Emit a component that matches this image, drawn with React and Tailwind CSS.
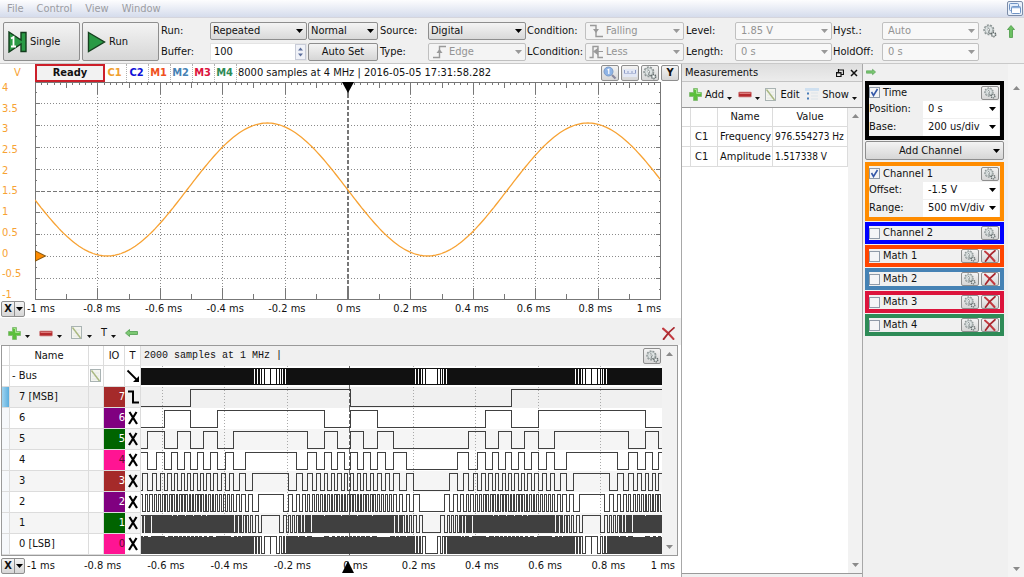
import React from "react";

const cx = (...parts) => parts.filter(Boolean).join(" ");

/* ---------- icons ---------- */

function Caret({ className = "text-black" }) {
  return (
    <svg aria-hidden="true" width="7" height="4" viewBox="0 0 7 4" className={cx("shrink-0", className)}>
      <path d="M0 0H7L3.5 4Z" fill="currentColor" />
    </svg>
  );
}

function CaretUp() {
  return (
    <svg aria-hidden="true" width="7" height="4" viewBox="0 0 7 4" className="text-[#8a8a8a]">
      <path d="M0 4H7L3.5 0Z" fill="currentColor" />
    </svg>
  );
}

function MiniCaret() {
  return (
    <svg aria-hidden="true" width="5" height="12" viewBox="0 0 5 12" className="shrink-0">
      <path d="M0 8H5L2.5 11Z" fill="#111" />
    </svg>
  );
}

function GearIcon({ size = 14 }) {
  return (
    <svg aria-hidden="true" width={size} height={size} viewBox="0 0 14 14">
      <circle cx="5.8" cy="5.8" r="4.6" fill="none" stroke="#8b9494" strokeWidth="1.8" strokeDasharray="1.9 1.3" />
      <circle cx="5.8" cy="5.8" r="4" fill="#dde3e3" stroke="#9aa2a2" strokeWidth="0.8" />
      <path d="M5 3.500L6.500 6L5.500 8.500L8 10L10 9.500" fill="none" stroke="#6a7272" strokeWidth="0.9" />
      <circle cx="5.4" cy="5.4" r="1" fill="#fff" stroke="#8a9292" strokeWidth="0.5" />
      <circle cx="10.6" cy="10.6" r="2.2" fill="#c3caca" stroke="#5f6767" strokeWidth="1.300" strokeDasharray="1.3 0.8" />
      <circle cx="10.6" cy="10.6" r="0.8" fill="#fff" />
    </svg>
  );
}

function PlusIcon() {
  return (
    <svg aria-hidden="true" width="13" height="13" viewBox="0 0 13 13">
      <path d="M4.500 0.500H8.500V4.500H12.500V8.500H8.500V12.500H4.500V8.500H0.500V4.500H4.500Z" fill="#5cbf3c" stroke="#7fb870" strokeWidth="0.8" />
      <path d="M5.500 1.500H7.500V5.500H11.500" fill="none" stroke="#a5e58d" strokeWidth="1" />
    </svg>
  );
}

function MinusIcon() {
  return (
    <svg aria-hidden="true" width="14" height="13" viewBox="0 0 14 13">
      <rect x="0.500" y="4" width="13" height="5" rx="1" fill="#b52a2e" stroke="#d59a9a" strokeWidth="0.8" />
      <path d="M1.500 5.500H12.500" stroke="#dd7c7c" strokeWidth="1" />
    </svg>
  );
}

function EditIcon({ className }) {
  return (
    <svg aria-hidden="true" width="12" height="14" viewBox="0 0 12 14" className={className}>
      <rect x="0.500" y="0.500" width="10" height="12" fill="#f3f4ee" stroke="#a9b3b3" />
      <path d="M2 4H9M2 7H9M2 10H9" stroke="#dfe5e5" strokeWidth="0.8" />
      <path d="M1.500 1.500L9.500 12" stroke="#a9b880" strokeWidth="1.4" />
    </svg>
  );
}

function ListIcon() {
  return (
    <svg aria-hidden="true" width="14" height="13" viewBox="0 0 14 13">
      <rect x="0" y="0" width="14" height="3" fill="#cfe0f0" />
      <path d="M2 5.500H4M2 10.500H4" stroke="#4a7db8" strokeWidth="2" />
      <path d="M6 5H13M6 8H13M6 11H13" stroke="#dce3ea" strokeWidth="1.2" />
    </svg>
  );
}

function CloseRed({ size = 12 }) {
  return (
    <svg aria-hidden="true" width={size} height={size} viewBox="0 0 12 12">
      <path d="M1 1.500Q5.500 5 10.500 11" stroke="#c23a40" strokeWidth="2" fill="none" strokeLinecap="round" />
      <path d="M11 0.800Q6 4.500 1.500 11.200" stroke="#a8282f" strokeWidth="1.7" fill="none" strokeLinecap="round" />
    </svg>
  );
}

function GreenArrow({ dir = "right" }) {
  if (dir === "up") {
    return (
      <svg aria-hidden="true" width="8" height="13" viewBox="0 0 8 13">
        <path d="M4 0.500L7.500 4.500H5.500V12.500H2.500V4.500H0.500Z" fill="#6cc062" stroke="#4a9a48" strokeWidth="0.8" />
      </svg>
    );
  }
  return (
    <svg aria-hidden="true" width={dir === "left" ? "13" : "10"} height="8" viewBox="0 0 13 8" className={dir === "left" ? "" : "rotate-180"}>
      <path d="M0.500 4L4.500 0.500V2.500H12.500V5.500H4.500V7.500Z" fill="#7cc872" stroke="#4f9c4e" strokeWidth="0.8" />
    </svg>
  );
}

function FallingIcon() {
  return (
    <svg aria-hidden="true" width="15" height="14" viewBox="0 0 15 14">
      <path d="M1 1.500H7V12.500H14" fill="none" stroke="#999" strokeWidth="1.4" />
      <path d="M4 5H10L7 9Z" fill="#999" />
    </svg>
  );
}

function RisingIcon() {
  return (
    <svg aria-hidden="true" width="15" height="14" viewBox="0 0 15 14">
      <path d="M1 12.500H7.500V1.500H14" fill="none" stroke="#999" strokeWidth="1.4" />
      <path d="M4.500 8H10.500L7.500 4Z" fill="#999" />
    </svg>
  );
}

function PulseIcon() {
  return (
    <svg aria-hidden="true" width="15" height="14" viewBox="0 0 15 14">
      <path d="M0.500 12.500H4V1.500H9V12.500H14" fill="none" stroke="#999" strokeWidth="1.4" />
      <path d="M5 6.500L8.500 4V9ZM8 6.500H14" fill="#999" stroke="#999" strokeWidth="1.2" />
    </svg>
  );
}

function SingleIcon() {
  return (
    <svg aria-hidden="true" width="19" height="22" viewBox="0 0 19 22">
      <path d="M1 1L13 9V1.500H18V20.500H13V13L1 21Z" fill="#2a9a45" stroke="#123c1c" strokeWidth="1.4" />
      <path d="M3 7.500L5.500 6V15M3 15.500H8" fill="none" stroke="#fff" strokeWidth="1.8" />
    </svg>
  );
}

function RunIcon() {
  return (
    <svg aria-hidden="true" width="19" height="22" viewBox="0 0 19 22">
      <path d="M1.500 1.500L17.500 11L1.500 20.500Z" fill="#2a9a45" stroke="#16401f" strokeWidth="1.4" />
    </svg>
  );
}

function MagnifierIcon() {
  return (
    <svg aria-hidden="true" width="14" height="14" viewBox="0 0 14 14">
      <circle cx="5.500" cy="5.500" r="4.500" fill="#8fb4e6" stroke="#7a9cc9" />
      <path d="M4.500 4L5.800 3.200V8" fill="none" stroke="#fff" strokeWidth="1.2" />
      <path d="M9 9L12.500 12.500" stroke="#8a8aa0" strokeWidth="2.200" />
    </svg>
  );
}

function RulerIcon() {
  return (
    <svg aria-hidden="true" width="14" height="10" viewBox="0 0 14 10">
      <rect x="0" y="1" width="14" height="8" fill="#e3e8f5" />
      <path d="M1.500 2V5M5 3V5M9 3V5M12.500 2V5" stroke="#8f9cc4" />
      <path d="M1 5.500H13" stroke="#b4bedb" />
    </svg>
  );
}

function WindowIcon() {
  return (
    <svg aria-hidden="true" width="12" height="11" viewBox="0 0 12 11">
      <rect x="0.500" y="0.500" width="9" height="7" rx="1" fill="#e4eefb" stroke="#6f93c4" />
      <rect x="2.500" y="3.500" width="9" height="7" rx="1" fill="#fff" stroke="#6f93c4" />
      <path d="M3 4.500H11" stroke="#8fb0dc" strokeWidth="1.500" />
    </svg>
  );
}

/* ---------- controls ---------- */

const raised =
  "flex items-center justify-center rounded-xs border border-[#8e8e8e] bg-linear-to-b from-[#f4f4f4] to-[#d6d6d6]";

function Combo({ label, value, icon, disabled, plain, className }) {
  return (
    <div className={cx("relative flex h-[18px] items-center", className)}>
      <select
        aria-label={label}
        disabled={disabled}
        defaultValue={value}
        className={cx(
          "h-full w-full appearance-none rounded-xs border opacity-100 outline-none",
          icon ? "pl-5" : disabled ? "pl-[5px]" : "pl-[2px]",
          disabled ? "border-[#c0c0c0] text-[#939393]" : "border-[#8e8e8e] text-[#111]",
          plain ? "bg-[#f8f8f8]" : disabled ? "bg-[#f4f4f4]" : "bg-linear-to-b from-[#f4f4f4] to-[#d9d9d9]"
        )}
      >
        <option>{value}</option>
      </select>
      {icon && <span className="pointer-events-none absolute left-1">{icon}</span>}
      <span className="pointer-events-none absolute right-1">
        <Caret className={disabled ? "text-[#999]" : "text-black"} />
      </span>
    </div>
  );
}

function IconButton({ label, children, className }) {
  return (
    <button type="button" aria-label={label} className={cx(raised, "h-4 w-[18px] shrink-0", className)}>
      {children}
    </button>
  );
}

function FlatButton({ label, children, className = "gap-[3px]" }) {
  return (
    <button type="button" aria-label={label} className={cx("flex items-center", className)}>
      {children}
    </button>
  );
}

/* ---------- top bars ---------- */

function MenuBar() {
  return (
    <header className="flex h-[18px] items-center justify-between border-b border-[#d5d5dc] bg-linear-to-b from-[#fdfdfe] to-[#d5dcec] pr-px pl-[7px]">
      <nav className="flex gap-[13px] pt-px text-[#9b9ca2]">
        {["File", "Control", "View", "Window"].map((m) => (
          <a key={m} href={"#" + m.toLowerCase()}>{m}</a>
        ))}
      </nav>
      <button type="button" aria-label="Restore window" className="flex h-[15px] w-[16px] items-center justify-center rounded-xs border border-[#7d8da8] bg-[#eaf1fb]">
        <WindowIcon />
      </button>
    </header>
  );
}

function TriggerBar() {
  return (
    <div className="flex items-center border-b border-[#c9c9c9] pt-1 pb-[2px] pl-[3px]">
      <button type="button" className={cx(raised, "h-[39px] w-[77px] justify-start gap-[3px] pl-1")}>
        <SingleIcon /> Single
      </button>
      <button type="button" className={cx(raised, "ml-[2px] mr-[2px] h-[39px] w-[77px] justify-start gap-[3px] pl-1")}>
        <RunIcon /> Run
      </button>
      <div className="grid grid-cols-[48px_97px_70px_48px_98px_57px_99px_49px_97px_48px_97px] items-center gap-x-px gap-y-[3px]">
        <span>Run:</span>
        <Combo label="Run" value="Repeated" />
        <Combo label="Trigger mode" value="Normal" />
        <span className="pl-px">Source:</span>
        <Combo label="Source" value="Digital" />
        <span>Condition:</span>
        <Combo label="Condition" value="Falling" icon={<FallingIcon />} disabled />
        <span className="pl-px">Level:</span>
        <Combo label="Level" value="1.85 V" disabled plain />
        <span>Hyst.:</span>
        <Combo label="Hysteresis" value="Auto" disabled plain />
        <label htmlFor="buffer">Buffer:</label>
        <div className="flex h-[18px] border border-[#e4e4e4] bg-white">
          <input id="buffer" type="text" defaultValue="100" className="w-0 flex-1 pl-[3px] outline-none" />
          <span className="flex w-[11px] flex-col items-center justify-center gap-1 border border-[#c8ccd8] bg-[#f0f2f8]">
            <svg aria-hidden="true" width="7" height="12" viewBox="0 0 7 12">
              <path d="M1 4.500L3.500 1.500L6 4.500ZM1 7.500L3.500 10.500L6 7.500Z" fill="#5d6f9c" />
            </svg>
          </span>
        </div>
        <button type="button" className={cx(raised, "h-[18px]")}>Auto Set</button>
        <span className="pl-px">Type:</span>
        <Combo label="Type" value="Edge" icon={<RisingIcon />} disabled />
        <span>LCondition:</span>
        <Combo label="LCondition" value="Less" icon={<PulseIcon />} disabled />
        <span className="pl-px">Length:</span>
        <Combo label="Length" value="0 s" disabled plain />
        <span>HoldOff:</span>
        <Combo label="HoldOff" value="0 s" disabled plain />
      </div>
      <div className="flex gap-[10px] self-start pt-[2px] pl-1">
        <FlatButton label="Trigger settings"><GearIcon /></FlatButton>
        <FlatButton label="Collapse toolbar"><GreenArrow dir="up" /></FlatButton>
      </div>
    </div>
  );
}

/* ---------- analog scope ---------- */

const sinePath = Array.from({ length: 313 }, (_, i) => {
  const x = i * 2;
  const y = 107.5 - 66.5 * Math.cos((2 * Math.PI * (x - 232)) / 320);
  return (i ? "L" : "M") + x + " " + y.toFixed(1);
}).join("");

function AnalogPlot() {
  const v = Array.from({ length: 9 }, (_, i) => Math.round(62.4 * (i + 1)) + 0.5);
  const h = Array.from({ length: 9 }, (_, i) => Math.round(21.9 * (i + 1) - 1) + 0.5);
  let ticks = "";
  for (let i = 1; i < 100; i++) {
    const x = Math.round(i * 6.24) + 0.5;
    const len = i % 10 === 0 ? 12 : i % 5 === 0 ? 6 : 3;
    ticks += `M${x} 0V${len}`;
    if (i % 5 === 0) ticks += `M${x} 218V${218 - len}`;
  }
  for (let i = 1; i < 20; i++) {
    const y = Math.round(i * 10.95 - 1) + 0.5;
    const len = i % 2 === 0 ? 5 : 2;
    ticks += `M0 ${y}H${len}M625 ${y}H${625 - len}`;
  }
  return (
    <svg role="img" aria-label="Channel 1 waveform" viewBox="0 0 625 218" preserveAspectRatio="none" className="h-[218px] w-full min-w-0 flex-1 bg-white">
      <g shapeRendering="crispEdges" fill="none">
        <path d={v.filter((_, i) => i !== 4).map((x) => `M${x} 0V218`).join("") + h.filter((_, i) => i !== 4).map((y) => `M0 ${y}H625`).join("")} stroke="#8a8a8a" strokeDasharray="1 2" />
        <path d={`M${v[4]} 0V218M0 ${h[4]}H625`} stroke="#777" strokeDasharray="4 2" />
        <path d={ticks} stroke="#777" />
        <rect x="0.500" y="0.500" width="624" height="217" stroke="#777" />
      </g>
      <path d={sinePath} fill="none" stroke="#f7a233" strokeWidth="1.300" />
      <path d="M306.500 0H318.500L312.500 11Z" fill="#000" />
      <path d="M0.500 169L10.500 174L0.500 179Z" fill="#ff8c00" stroke="#8a5a14" />
    </svg>
  );
}

const timeLabels = ["-1 ms", "-0.8 ms", "-0.6 ms", "-0.4 ms", "-0.2 ms", "0 ms", "0.2 ms", "0.4 ms", "0.6 ms", "0.8 ms", "1 ms"];

function TimeAxis({ className, marker }) {
  return (
    <div className={cx("flex items-center bg-white pl-px", className)}>
      <button type="button" aria-label="X axis menu" className={cx(raised, "h-4 w-6 shrink-0 font-bold")}>
        <span className="flex-1">X</span>
        <span className="flex h-full w-[10px] items-center justify-center border-l border-[#8e8e8e]"><Caret /></span>
      </button>
      {timeLabels.map((t, i) => (
        <span
          key={t}
          className={cx(
            "whitespace-nowrap",
            i === 0 ? "w-[46px] pl-[2px]" : i === 10 ? "w-[35px] text-right" : "relative flex-1 text-center"
          )}
        >
          {t}
          {marker && i === 5 && (
            <svg aria-hidden="true" width="12" height="12" viewBox="0 0 12 12" className="absolute top-[2px] left-[18px]">
              <path d="M0 12H12L6 0Z" fill="#000" />
            </svg>
          )}
        </span>
      ))}
    </div>
  );
}

const tabs = [
  ["C1", "text-[#f0a030] bg-white"],
  ["C2", "text-[#1010d8]"],
  ["M1", "text-[#f05020]"],
  ["M2", "text-[#4682b4]"],
  ["M3", "text-[#dc143c]"],
  ["M4", "text-[#2e8b57]"],
];

function AnalogScope() {
  return (
    <section className="bg-white">
      <div className="flex h-[18px] items-center">
        <span className="w-[35px] text-center text-[#f7a233]">V</span>
        <span className="flex h-[18px] w-[70px] items-center justify-center border-2 border-[#cc1f2a] bg-[#f2f2f2] font-bold">Ready</span>
        {tabs.map(([name, tone]) => (
          <button key={name} type="button" className={cx("h-full w-[22px] border-r border-dotted border-[#b0b0b0] pr-[2px] font-bold", tone)}>
            {name}
          </button>
        ))}
        <span className="flex-1 pl-px whitespace-nowrap">8000 samples at 4 MHz | 2016-05-05 17:31:58.282</span>
        <div className="flex gap-[2px] pr-[2px]">
          <IconButton label="Zoom"><MagnifierIcon /></IconButton>
          <IconButton label="Ruler"><RulerIcon /></IconButton>
          <IconButton label="Plot settings"><GearIcon /></IconButton>
          <IconButton label="Y axis"><b>Y</b></IconButton>
        </div>
      </div>
      <div className="flex pr-5">
        <div className="flex w-[35px] shrink-0 flex-col justify-between pl-[2px] leading-[11px] text-[#f7a233]">
          {["4", "3.5", "3", "2.5", "2", "1.5", "1", "0.5", "0", "-0.5", "-1"].map((n) => (
            <span key={n}>{n}</span>
          ))}
        </div>
        <AnalogPlot />
      </div>
      <TimeAxis className="h-[18px] pr-5" />
    </section>
  );
}

/* ---------- logic analyzer ---------- */

const WAVE_W = 520;
const STEPS = WAVE_W * 4;
const codes = Array.from({ length: STEPS }, (_, i) => {
  const s = Math.sin((2 * Math.PI * (i / 4 - 49.5)) / 320);
  return Math.floor(128 + 127.9 * s);
});

function edgesOf(bit) {
  const edges = [];
  let prev = (codes[0] >> bit) & 1;
  const first = prev;
  for (let i = 1; i < STEPS; i++) {
    const b = (codes[i] >> bit) & 1;
    if (b !== prev) {
      edges.push([Math.floor(i / 4), b]);
      prev = b;
    }
  }
  return { first, edges };
}

function bitPath(bit) {
  const { first, edges } = edgesOf(bit);
  let d = `M0 ${first ? 2.5 : 19.5}`;
  for (const [x, b] of edges) d += `H${x + 0.5}V${b ? 2.5 : 19.5}`;
  d += `H${WAVE_W}`;
  if (bit === 0) d += "M129.500 2V20M449.500 2V20";
  return d;
}

const busLines = edgesOf(0).edges.map(([x]) => `M${x + 0.5} 2V19`).join("") + "M129.500 2V19M449.500 2V19";
const gridX = [21, 83, 146, 271, 333, 396, 458];

function Wave({ bit }) {
  const isBus = bit === undefined;
  return (
    <svg aria-hidden="true" viewBox="0 0 520 21" preserveAspectRatio="none" shapeRendering="crispEdges" className="block h-[21px] w-full">
      <path d={gridX.map((x) => `M${x + 0.5} 0V21`).join("")} stroke="#aaa" strokeDasharray="1 2" />
      <path d="M208.500 0V21" stroke="#666" strokeDasharray="4 2" />
      {isBus && <rect x="0" y="2" width="520" height="17" fill="#fff" />}
      {isBus && <path d="M0 2.500H520M0 18.500H520" stroke="#111" />}
      <path d={isBus ? busLines : bitPath(bit)} fill="none" stroke={isBus ? "#111" : "#404040"} />
    </svg>
  );
}

function TriggerGlyph({ kind }) {
  return (
    <svg aria-hidden="true" width="14" height="16" viewBox="0 0 14 16" className="mx-auto">
      {kind === "x" && <path d="M3.500 2L11 14M10.500 2L3 14" stroke="#000" strokeWidth="2.200" />}
      {kind === "fall" && <path d="M2 2.500H7V13.500H13" stroke="#000" strokeWidth="2" fill="none" />}
      {kind === "arrow" && (
        <>
          <path d="M1.500 2.500L11 12" stroke="#000" strokeWidth="1.800" />
          <path d="M13 14V8L7 14Z" fill="#000" />
        </>
      )}
    </svg>
  );
}

const bits = [
  { bit: 7, name: "7 [MSB]", io: "bg-[#a52a2a] text-white", row: "bg-[#f0f0f0]" },
  { bit: 6, name: "6", io: "bg-[#800080] text-white", row: "bg-white" },
  { bit: 5, name: "5", io: "bg-[#006400] text-white", row: "bg-[#f5f5f5]" },
  { bit: 4, name: "4", io: "bg-[#ff1493] text-[#5a1030]", row: "bg-white" },
  { bit: 3, name: "3", io: "bg-[#a52a2a] text-white", row: "bg-[#f5f5f5]" },
  { bit: 2, name: "2", io: "bg-[#800080] text-white", row: "bg-white" },
  { bit: 1, name: "1", io: "bg-[#006400] text-white", row: "bg-[#f5f5f5]" },
  { bit: 0, name: "0 [LSB]", io: "bg-[#ff1493] text-[#5a1030]", row: "bg-white" },
];

const cell = "border-r border-b border-[#dcdcdc] p-0";

function LogicTable() {
  return (
    <table className="w-full min-w-0 flex-1 table-fixed border-separate border-spacing-0 bg-white">
      <colgroup>
        <col className="w-2" />
        <col className="w-[79px]" />
        <col className="w-[15px]" />
        <col className="w-[21px]" />
        <col className="w-4" />
        <col />
      </colgroup>
      <thead>
        <tr className="h-[20px]">
          <th className={cell} aria-label="Handle" />
          <th className={cx(cell, "font-normal")}>Name</th>
          <th className={cell} aria-label="Edit" />
          <th className={cx(cell, "font-normal")}>IO</th>
          <th className={cx(cell, "font-normal")}>T</th>
          <th className="bg-[#f0f0f0] p-0 pl-[3px] font-normal">
            <div className="flex items-center justify-between">
              <span className="font-['Liberation_Mono',monospace] text-[10px]">2000 samples at 1 MHz |</span>
              <IconButton label="Logic settings" className="mr-px w-4"><GearIcon size={13} /></IconButton>
            </div>
          </th>
        </tr>
      </thead>
      <tbody>
        <tr className="h-[21px]">
          <td className={cell} />
          <td className={cx(cell, "pl-[2px]")}>- Bus</td>
          <td className={cell}><EditIcon className="mx-auto" /></td>
          <td className={cell} />
          <td className={cell}><TriggerGlyph kind="arrow" /></td>
          <td className="p-0"><Wave /></td>
        </tr>
        {bits.map((r) => (
          <tr key={r.bit} className={cx("h-[21px]", r.row)}>
            <td className={cx(cell, r.bit === 7 ? "bg-linear-to-r from-[#9fd4f0] to-[#5aaede]" : "bg-[#f6f8fb]")} />
            <td className={cx(cell, "pl-[9px]")}>{r.name}</td>
            <td className={cell} />
            <td className={cx("border-b border-[#dcdcdc] p-0 text-right", r.io)}>{r.bit}</td>
            <td className={cell}><TriggerGlyph kind={r.bit === 7 ? "fall" : "x"} /></td>
            <td className="p-0"><Wave bit={r.bit} /></td>
          </tr>
        ))}
      </tbody>
    </table>
  );
}

function LogicAnalyzer() {
  return (
    <section className="flex flex-1 flex-col bg-white">
      <div className="flex h-[27px] items-center gap-[9px] bg-[#f0f0f0] pt-[3px] pr-[6px] pl-2">
        <FlatButton label="Add signal" className="gap-1"><PlusIcon /><MiniCaret /></FlatButton>
        <FlatButton label="Remove signal" className="gap-1"><MinusIcon /><MiniCaret /></FlatButton>
        <FlatButton label="Edit signal" className="gap-1"><EditIcon /><MiniCaret /></FlatButton>
        <FlatButton label="Trigger" className="gap-1"><span>T</span><MiniCaret /></FlatButton>
        <FlatButton label="Dock left"><GreenArrow dir="left" /></FlatButton>
        <span className="flex-1" />
        <FlatButton label="Close logic view"><CloseRed size={13} /></FlatButton>
      </div>
      <div className="mr-[3px] ml-px flex border border-[#9a9a9a] bg-[#f0f0f0]">
        <LogicTable />
        <div className="flex w-[15px] shrink-0 flex-col items-center justify-between bg-[#f2f2f2] py-[6px]">
          <CaretUp />
          <Caret className="text-[#8a8a8a]" />
        </div>
      </div>
      <TimeAxis className="h-[20px] pr-[6px]" marker />
    </section>
  );
}

/* ---------- measurements ---------- */

const measures = [
  ["C1", "Frequency", "976.554273 Hz"],
  ["C1", "Amplitude", "1.517338 V"],
];

function Measurements() {
  const c = "border-r border-b border-[#dcdcdc] p-0";
  return (
    <aside className="flex w-[182px] shrink-0 flex-col border-x border-[#a8a8a8] bg-[#f0f0f0]">
      <div className="flex h-[18px] items-center justify-between border-b border-[#c4c4c4] bg-linear-to-b from-[#dedede] to-[#ececec] pr-1 pl-[3px]">
        <h2>Measurements</h2>
        <div className="flex gap-[6px]">
          <FlatButton label="Float panel">
            <svg aria-hidden="true" width="8" height="8" viewBox="0 0 8 8">
              <path d="M2.500 0V3M2 1H8M7.500 1V5.500H5" stroke="#111" fill="none" strokeWidth="1.200" />
              <path d="M0.500 3.500H5V7.500H0.500ZM0 4H5.500" stroke="#111" fill="none" strokeWidth="1.200" />
            </svg>
          </FlatButton>
          <FlatButton label="Close panel">
            <svg aria-hidden="true" width="8" height="8" viewBox="0 0 8 8">
              <path d="M1 1L7 7M7 1L1 7" stroke="#111" strokeWidth="1.500" />
            </svg>
          </FlatButton>
        </div>
      </div>
      <div className="flex h-[25px] items-center justify-between pr-[5px] pl-[7px]">
        <FlatButton label="Add"><PlusIcon /><span>Add</span><MiniCaret /></FlatButton>
        <FlatButton label="Remove"><MinusIcon /><MiniCaret /></FlatButton>
        <FlatButton label="Edit"><EditIcon /><span>Edit</span></FlatButton>
        <FlatButton label="Show"><ListIcon /><span>Show</span><MiniCaret /></FlatButton>
      </div>
      <div className="mb-[3px] flex flex-1 border-y border-[#9a9a9a] bg-white">
        <div className="flex-1">
          <table className="w-full table-fixed border-separate border-spacing-0">
            <colgroup>
              <col className="w-[9px]" />
              <col className="w-[27px]" />
              <col className="w-[55px]" />
              <col />
            </colgroup>
            <thead>
              <tr className="h-[19px]">
                <th className={c} aria-label="Handle" />
                <th className={c} aria-label="Channel" />
                <th className={cx(c, "font-normal")}>Name</th>
                <th className={cx(c, "font-normal")}>Value</th>
              </tr>
            </thead>
            <tbody>
              {measures.map(([ch, n, v]) => (
                <tr key={n} className="h-[20px]">
                  <td className={c} />
                  <td className={cx(c, "pl-1")}>{ch}</td>
                  <td className={cx(c, "pl-[2px] whitespace-nowrap")}>{n}</td>
                  <td className={cx(c, "pl-[2px] text-[10px] whitespace-nowrap")}>{v}</td>
                </tr>
              ))}
            </tbody>
          </table>
        </div>
        <div className="flex w-[14px] flex-col items-center justify-between bg-[#f2f2f2] py-[6px]">
          <CaretUp />
          <Caret className="text-[#8a8a8a]" />
        </div>
      </div>
    </aside>
  );
}

/* ---------- channel panel ---------- */

function Tick({ checked, label }) {
  return (
    <label className="flex flex-1 items-center gap-[3px]">
      <span className="relative flex">
        <input
          type="checkbox"
          defaultChecked={checked}
          className="peer size-[11px] appearance-none border border-[#8f9aa8] bg-[#f4f5f7]"
        />
        <svg aria-hidden="true" width="9" height="9" viewBox="0 0 9 9" className="pointer-events-none absolute top-px left-px hidden peer-checked:block">
          <path d="M1.500 4L3.500 7.500L7.500 1" stroke="#3558a8" strokeWidth="1.600" fill="none" />
        </svg>
      </span>
      {label}
    </label>
  );
}

function Field({ name, value }) {
  return (
    <div className="flex h-[18px] items-center">
      <span className="w-[54px]">{name}:</span>
      <div className="relative flex h-[17px] flex-1 items-center">
        <select aria-label={name} defaultValue={value} className="h-full w-full appearance-none bg-white pl-[5px] outline-none">
          <option>{value}</option>
        </select>
        <span className="pointer-events-none absolute right-[3px]"><Caret /></span>
      </div>
    </div>
  );
}

function ChannelBox({ label, tone, checked, removable, children }) {
  return (
    <div className={cx("border-4 pr-px", tone)}>
      <div className={cx("flex items-center gap-[2px]", children ? "h-[15px]" : "h-[14px]")}>
        <Tick label={label} checked={checked} />
        <IconButton label={label + " settings"} className="h-[14px]"><GearIcon size={12} /></IconButton>
        {removable && <IconButton label={"Remove " + label} className="h-[14px]"><CloseRed /></IconButton>}
      </div>
      {children}
    </div>
  );
}

function ChannelPanel() {
  return (
    <aside className="flex w-[161px] shrink-0 bg-[#f0f0f0]">
      <div className="flex w-[141px] flex-col gap-px pl-[2px]">
        <div className="flex h-4 items-center pl-px">
          <FlatButton label="Collapse panel"><GreenArrow /></FlatButton>
        </div>
        <ChannelBox label="Time" tone="border-black" checked>
          <Field name="Position" value="0 s" />
          <Field name="Base" value="200 us/div" />
        </ChannelBox>
        <button type="button" className={cx(raised, "mb-px h-[19px] pr-[3px]")}>
          <span className="flex-1 pl-[2px]">Add Channel</span>
          <Caret />
        </button>
        <ChannelBox label="Channel 1" tone="border-[#ff8c00]" checked>
          <Field name="Offset" value="-1.5 V" />
          <Field name="Range" value="500 mV/div" />
        </ChannelBox>
        <ChannelBox label="Channel 2" tone="border-[#0000ff]" />
        <ChannelBox label="Math 1" tone="border-[#ff4500]" removable />
        <ChannelBox label="Math 2" tone="border-[#4682b4]" removable />
        <ChannelBox label="Math 3" tone="border-[#dc143c]" removable />
        <ChannelBox label="Math 4" tone="border-[#2e8b57]" removable />
      </div>
      <div className="ml-auto flex w-4 flex-col items-center justify-between bg-[#f4f4f4] pt-[22px] pb-[6px]">
        <CaretUp />
        <Caret className="text-[#8a8a8a]" />
      </div>
    </aside>
  );
}

export default function App() {
  return (
    <div className="flex min-h-screen flex-col bg-[#f0f0f0] font-['DejaVu_Sans_Condensed','Noto_Sans',sans-serif] text-[11px] leading-[14px] text-[#111]">
      <MenuBar />
      <TriggerBar />
      <main className="flex flex-1">
        <div className="flex min-w-0 flex-1 flex-col">
          <AnalogScope />
          <LogicAnalyzer />
        </div>
        <Measurements />
        <ChannelPanel />
      </main>
    </div>
  );
}
